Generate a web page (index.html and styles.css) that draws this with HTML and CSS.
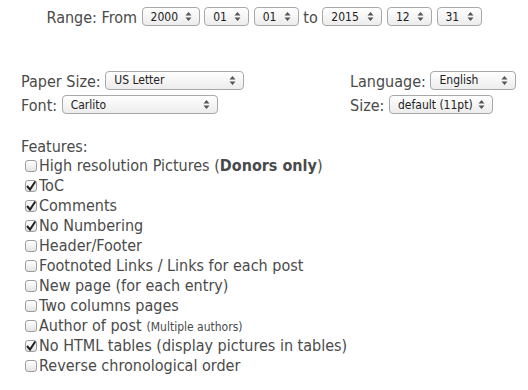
FILE: index.html
```html
<!DOCTYPE html>
<html lang="en">
<head>
    <meta charset="UTF-8">
    <title>Export options</title>
    <link rel="stylesheet" href="styles.css">
</head>
<body>
    <div class="range">
        Range: From
        <select class="sel w-year"><option>2000</option></select>
        <select class="sel w-day"><option>01</option></select>
        <select class="sel w-day"><option>01</option></select>
        to
        <select class="sel w-year2"><option>2015</option></select>
        <select class="sel w-day"><option>12</option></select>
        <select class="sel w-day"><option>31</option></select>
    </div>

    <div class="options">
        <div class="opt">Paper Size: <select class="sel w-paper"><option>US Letter</option></select></div>
        <div class="opt">Language: <select class="sel w-lang"><option>English</option></select></div>
        <div class="opt">Font: <select class="sel w-font"><option>Carlito</option></select></div>
        <div class="opt">Size: <select class="sel w-size"><option>default (11pt)</option></select></div>
    </div>

    <div class="features">
        <div class="title">Features:</div>
        <label class="feat"><input type="checkbox">High resolution Pictures (<b>Donors only</b>)</label>
        <label class="feat"><input type="checkbox" checked>ToC</label>
        <label class="feat"><input type="checkbox" checked>Comments</label>
        <label class="feat"><input type="checkbox" checked>No Numbering</label>
        <label class="feat"><input type="checkbox">Header/Footer</label>
        <label class="feat"><input type="checkbox">Footnoted Links / Links for each post</label>
        <label class="feat"><input type="checkbox">New page (for each entry)</label>
        <label class="feat"><input type="checkbox">Two columns pages</label>
        <label class="feat"><input type="checkbox">Author of post <small>(Multiple authors)</small></label>
        <label class="feat"><input type="checkbox" checked>No HTML tables (display pictures in tables)</label>
        <label class="feat"><input type="checkbox">Reverse chronological order</label>
    </div>
</body>
</html>
```

FILE: styles.css
```css
body {
    margin: 0;
    background: #fff;
    color: #4a4a4a;
    font-family: "DejaVu Sans Condensed", "DejaVu Sans", sans-serif;
    font-size: 16px;
}

/* mac-style popup buttons */
.sel {
    -webkit-appearance: none;
    appearance: none;
    height: 19px;
    margin: 0;
    padding: 0 14px 0 8px;
    border: 1px solid #a8a8a8;
    border-radius: 4px;
    background-color: #f6f6f6;
    background-image:
        url("data:image/svg+xml,%3Csvg xmlns='http://www.w3.org/2000/svg' width='7' height='9'%3E%3Cpath d='M3.5 0L6.5 3.5H0.5Z M3.5 9L6.5 5.5H0.5Z' fill='%23555'/%3E%3C/svg%3E"),
        linear-gradient(#ffffff, #ececec);
    background-repeat: no-repeat;
    background-position: right 7px center, 0 0;
    color: #222;
    font-family: "DejaVu Sans Condensed", "DejaVu Sans", sans-serif;
    font-size: 12px;
    vertical-align: 2px;
}

.range {
    padding-top: 7px;
    text-align: center;
}

.w-year { width: 58px; }
.w-year2 { width: 60px; }
.w-day { width: 45px; }
.w-paper { width: 139px; }
.w-lang { width: 86px; }
.w-font { width: 156px; }
.w-size { width: 104px; }

.options {
    display: grid;
    grid-template-columns: 329px auto;
    row-gap: 5px;
    margin-top: 44px;
    padding-left: 21px;
}

.features {
    margin-top: 23px;
    padding-left: 21px;
}

.title {
    line-height: 18px;
}

.feat {
    display: flex;
    align-items: center;
    height: 20px;
}

.feat small {
    font-size: 12px;
    margin-left: 5px;
    margin-top: 3px;
}

.feat input {
    -webkit-appearance: none;
    appearance: none;
    width: 12px;
    height: 12px;
    margin: 1px 2px 0 4px;
    border: 1px solid #9c9c9c;
    border-radius: 3px;
    background: linear-gradient(#ffffff, #e4e4e4);
}

.feat input:checked {
    background:
        url("data:image/svg+xml,%3Csvg xmlns='http://www.w3.org/2000/svg' width='12' height='12'%3E%3Cpath d='M2 6L5 9.5L11 0.5' fill='none' stroke='%23222' stroke-width='2'/%3E%3C/svg%3E") no-repeat center,
        linear-gradient(#ffffff, #e4e4e4);
}
```
